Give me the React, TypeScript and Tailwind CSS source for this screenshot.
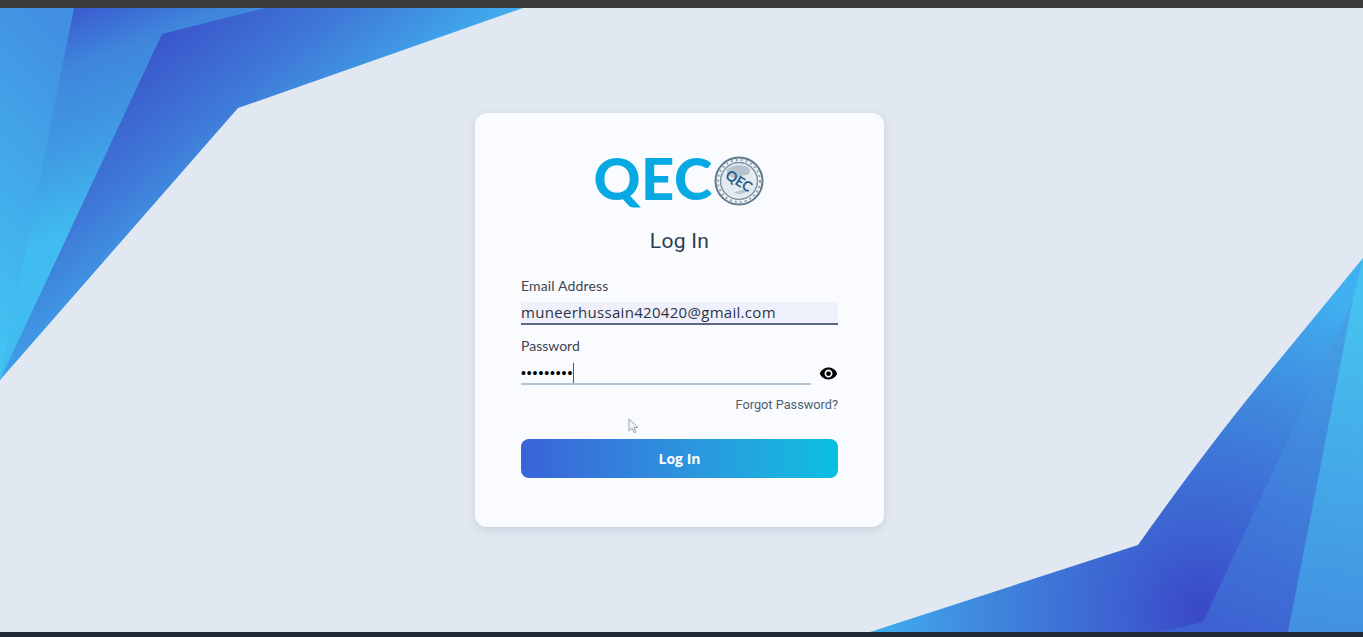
function BackgroundArt() {
  return (
    <svg className="absolute inset-0 h-full w-full" viewBox="0 0 1363 624" preserveAspectRatio="none">
      <defs>
        <linearGradient id="leftBand" x1="0.5" y1="0" x2="0.3" y2="1">
          <stop offset="0" stopColor="#4290e2" />
          <stop offset="1" stopColor="#42c4f2" />
        </linearGradient>
        <linearGradient id="midBand" gradientUnits="userSpaceOnUse" x1="85" y1="0" x2="160" y2="192">
          <stop offset="0" stopColor="#3a5ed0" />
          <stop offset="0.25" stopColor="#3f86dc" />
          <stop offset="0.6" stopColor="#3f9ae3" />
          <stop offset="1" stopColor="#40bcf0" />
        </linearGradient>
        <linearGradient id="mainBand" gradientUnits="userSpaceOnUse" x1="165" y1="22" x2="300" y2="192">
          <stop offset="0" stopColor="#3a55cb" />
          <stop offset="0.45" stopColor="#3f7ad8" />
          <stop offset="1" stopColor="#40b4f0" />
        </linearGradient>
        <radialGradient id="rightMain" gradientUnits="userSpaceOnUse" cx="1200" cy="602" r="340">
          <stop offset="0" stopColor="#3a48c6" />
          <stop offset="0.2" stopColor="#3c5ed0" />
          <stop offset="0.6" stopColor="#3f84dc" />
          <stop offset="1" stopColor="#40b0f0" />
        </radialGradient>
        <linearGradient id="rightMid" gradientUnits="userSpaceOnUse" x1="1220" y1="620" x2="1350" y2="290">
          <stop offset="0" stopColor="#3d62d2" />
          <stop offset="1" stopColor="#44a6e6" />
        </linearGradient>
        <linearGradient id="rightEdge" gradientUnits="userSpaceOnUse" x1="1300" y1="624" x2="1360" y2="300">
          <stop offset="0" stopColor="#4290e0" />
          <stop offset="1" stopColor="#46c2f0" />
        </linearGradient>
      </defs>
      <polygon points="0,0 523,0 238,100 0,372" fill="url(#mainBand)" />
      <polygon points="74,0 265,0 162,26 0,372 0,360" fill="url(#midBand)" />
      <polygon points="0,0 74,0 0,372" fill="url(#leftBand)" />
      <path d="M1363 250L1258 378Q1204 444 1138 537L870 624H1363Z" fill="url(#rightMain)" />
      <polygon points="1353,292 1203,614 1160,624 1288,624" fill="url(#rightMid)" />
      <polygon points="1288,624 1353,292 1363,250 1363,624" fill="url(#rightEdge)" />
    </svg>
  );
}

function QecSeal() {
  return (
    <svg viewBox="0 0 50 50" className="h-[50px] w-[50px] shrink-0">
      <circle cx="25" cy="25" r="23.5" fill="#f2f5f8" stroke="#5f7b8c" strokeWidth="2" />
      <circle cx="25" cy="25" r="18.5" fill="#e4eaef" stroke="#7f95a4" strokeWidth="1.5" />
      <path d="M13 13c6-4 14-5 21-2 3 3 2 8-2 8-5 0-7 4-12 3-4-1-8-4-7-9z" fill="#b7c3cd" />
      <path d="M20 37c4-3 10-2 15-5-1 4-8 8-15 5z" fill="#b7c3cd" />
      <circle cx="25" cy="25" r="21" fill="none" stroke="#93a5b2" strokeWidth="2" strokeDasharray="2 3" />
      <text
        x="25"
        y="30"
        textAnchor="middle"
        transform="rotate(32 25 25)"
        fontFamily="Lato, sans-serif"
        fontWeight="700"
        fontSize="14"
        fill="#245f8c"
      >
        QEC
      </text>
    </svg>
  );
}

export default function App() {
  return (
    <div className="flex h-[637px] w-full flex-col overflow-hidden bg-[#e2e8f1]">
      <div className="h-2 shrink-0 bg-[#3b3b3d]" />
      <main className="relative flex flex-1 items-center justify-center pr-1">
        <BackgroundArt />
        <div className="relative flex h-[414px] w-[409px] flex-col rounded-xl bg-[#fafbfe] px-[46px] pt-[42px] shadow-[0_3px_10px_rgba(90,105,130,0.18)]">
          <div className="flex h-[52px] items-center justify-center pr-[2px]">
            <span className="mr-[1px] -translate-y-[3px] font-['Lato',sans-serif] text-[58px] leading-none font-black tracking-[0.5px] text-[#07a9e3]">
              QEC
            </span>
            <QecSeal />
          </div>
          <h1 className="mt-5 text-center font-['Roboto',sans-serif] text-[21px] leading-7 font-normal tracking-[0.3px] text-[#2c3e50]">
            Log In
          </h1>

          <label className="mt-[21px] font-['Lato',sans-serif] text-sm leading-5 tracking-[0.15px] text-[#3c4652]">
            Email Address
          </label>
          <div className="mt-[6px] flex h-[23px] items-center border-b-2 border-[#5c6783] bg-[#eef0fb] font-['Open_Sans',sans-serif] text-[15px] font-medium tracking-[0.3px] text-[#2c3347]">
            muneerhussain420420@gmail.com
          </div>

          <label className="mt-[11px] font-['Lato',sans-serif] text-sm leading-5 text-[#3c4652]">Password</label>
          <div className="mt-[6px] flex h-[23px] items-center gap-2">
            <div className="flex h-full flex-1 items-center border-b-2 border-[#b4c4d4]">
              <span className="border-r border-[#4a5568] font-['Liberation_Sans',sans-serif] text-[14px] leading-[20px] tracking-[0.9px] text-black">
                •••••••••
              </span>
            </div>
            <svg viewBox="0 0 24 24" className="h-[19px] w-[19px] shrink-0 fill-black">
              <path d="M12 4.5C7 4.5 2.73 7.61 1 12c1.73 4.39 6 7.5 11 7.5s9.27-3.11 11-7.5c-1.73-4.39-6-7.5-11-7.5zM12 17c-2.76 0-5-2.24-5-5s2.24-5 5-5 5 2.24 5 5-2.24 5-5 5zm0-8c-1.66 0-3 1.34-3 3s1.34 3 3 3 3-1.34 3-3-1.34-3-3-3z" />
            </svg>
          </div>

          <a className="mt-3 self-end font-['Roboto',sans-serif] text-[12.75px] leading-4 text-[#4a6072]">
            Forgot Password?
          </a>

          <button className="mt-[26px] h-[39px] rounded-lg bg-gradient-to-r from-[#3a62d8] to-[#06bfe0] font-['Open_Sans',sans-serif] text-sm font-bold text-white">
            Log In
          </button>

          {/* mouse cursor caught in the capture */}
          <svg viewBox="0 0 11 16" className="absolute top-[305px] left-[153px] h-4 w-[11px] fill-[#f4f6f9] stroke-[#9aa3ad]">
            <path d="M1 1v12l3-2.8 2.2 4.6 1.8-.8-2.1-4.5H10z" />
          </svg>
        </div>
      </main>
      <div className="h-[5px] shrink-0 bg-[#1f2a35]" />
    </div>
  );
}
